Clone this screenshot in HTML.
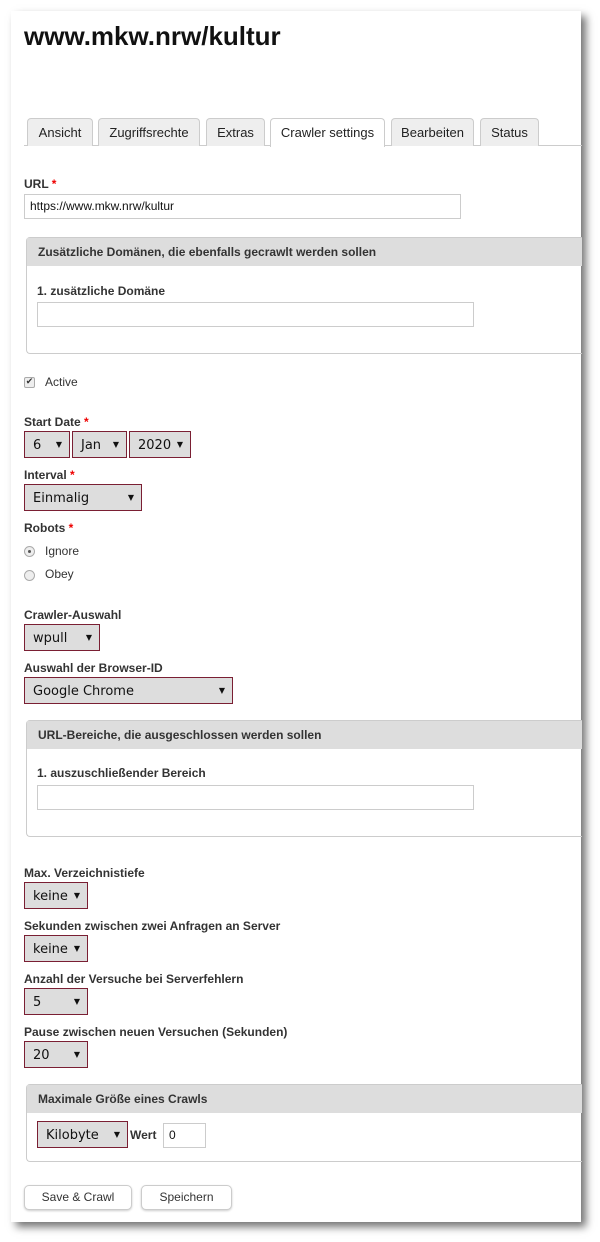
<!DOCTYPE html>
<html><head><meta charset="utf-8"><style>
*{box-sizing:border-box;margin:0;padding:0}
body{width:600px;height:1242px;background:#fff;position:relative;font-family:"DejaVu Sans","Liberation Sans",sans-serif;color:#333;overflow:hidden}
#p{position:absolute;left:11px;top:11px;width:570px;height:1211px;background:#fff;box-shadow:5px 5px 8px rgba(0,0,0,.55)}
.a{position:absolute}
h1{position:absolute;left:24px;top:21px;font:bold 26px "Liberation Sans",sans-serif;color:#111}
.tab{position:absolute;top:118px;height:28px;border:1px solid #ccc;border-bottom:none;border-radius:4px 4px 0 0;background:#eee;font:13px "Liberation Sans",sans-serif;color:#222;text-align:center;line-height:27px}
.tab.on{background:#fff;height:29px}
.lbl{position:absolute;left:24px;font:bold 12px "Liberation Sans",sans-serif;color:#333}
.lbl b{color:#e00}
.in{position:absolute;border:1px solid #ccc;background:#fff;font:12px "Liberation Sans",sans-serif;padding-left:5px;line-height:23px;color:#111}
.sel{position:absolute;height:27px;border:1px solid #7a1f33;background:#ddd;font-size:13px;color:#111;padding-left:8px;line-height:27px}
.sel:after{content:"▼";position:absolute;right:7px;top:0;font-size:8px;line-height:25px}
.fs{position:absolute;left:26px;width:556px;border:1px solid #ccc;border-radius:4px 0 0 4px;border-right:none}
.fs .h{height:28px;background:#ddd;font:bold 12px "Liberation Sans",sans-serif;padding-left:11px;line-height:28px;color:#333}
.t{position:absolute;font:12px "Liberation Sans",sans-serif;color:#333}
.btn{position:absolute;top:1185px;height:25px;border:1px solid #ccc;border-radius:5px;background:#fff;font:12px "Liberation Sans",sans-serif;text-align:center;line-height:23px;box-shadow:0 1px 2px rgba(0,0,0,.2)}
</style></head><body>
<div id="p"></div>
<h1>www.mkw.nrw/kultur</h1>
<div class="a" style="left:24px;top:145px;width:558px;border-top:1px solid #ccc"></div>
<div class="tab" style="left:27px;width:66px">Ansicht</div>
<div class="tab" style="left:98px;width:102px">Zugriffsrechte</div>
<div class="tab" style="left:206px;width:59px">Extras</div>
<div class="tab on" style="left:270px;width:115px">Crawler settings</div>
<div class="tab" style="left:391px;width:83px">Bearbeiten</div>
<div class="tab" style="left:480px;width:59px">Status</div>

<div class="lbl" style="top:177px">URL <b>*</b></div>
<div class="in" style="left:24px;top:194px;width:437px;height:25px">https://www.mkw.nrw/kultur</div>

<div class="fs" style="top:237px;height:117px"><div class="h">Zusätzliche Domänen, die ebenfalls gecrawlt werden sollen</div></div>
<div class="lbl" style="left:37px;top:284px">1. zusätzliche Domäne</div>
<div class="in" style="left:37px;top:302px;width:437px;height:25px"></div>

<div class="a" style="left:24px;top:377px;width:11px;height:11px;border:1px solid #aaa;border-radius:2px;background:#eee;font-size:9px;line-height:9px;text-align:center">✔</div>
<div class="t" style="left:45px;top:375px">Active</div>

<div class="lbl" style="top:415px">Start Date <b>*</b></div>
<div class="sel" style="left:24px;top:431px;width:46px">6</div>
<div class="sel" style="left:72px;top:431px;width:55px">Jan</div>
<div class="sel" style="left:129px;top:431px;width:62px">2020</div>

<div class="lbl" style="top:468px">Interval <b>*</b></div>
<div class="sel" style="left:24px;top:484px;width:118px">Einmalig</div>

<div class="lbl" style="top:521px">Robots <b>*</b></div>
<div class="a" style="left:24px;top:546px;width:11px;height:11px;border:1px solid #aaa;border-radius:50%;background:#eee"><div style="position:absolute;left:3px;top:3px;width:3px;height:3px;border-radius:50%;background:#555"></div></div>
<div class="t" style="left:45px;top:544px">Ignore</div>
<div class="a" style="left:24px;top:570px;width:11px;height:11px;border:1px solid #aaa;border-radius:50%;background:#eee"></div>
<div class="t" style="left:45px;top:567px">Obey</div>

<div class="lbl" style="top:608px">Crawler-Auswahl</div>
<div class="sel" style="left:24px;top:624px;width:76px">wpull</div>
<div class="lbl" style="top:661px">Auswahl der Browser-ID</div>
<div class="sel" style="left:24px;top:677px;width:209px">Google Chrome</div>

<div class="fs" style="top:720px;height:117px"><div class="h">URL-Bereiche, die ausgeschlossen werden sollen</div></div>
<div class="lbl" style="left:37px;top:766px">1. auszuschließender Bereich</div>
<div class="in" style="left:37px;top:785px;width:437px;height:25px"></div>

<div class="lbl" style="top:866px">Max. Verzeichnistiefe</div>
<div class="sel" style="left:24px;top:882px;width:64px">keine</div>
<div class="lbl" style="top:919px">Sekunden zwischen zwei Anfragen an Server</div>
<div class="sel" style="left:24px;top:935px;width:64px">keine</div>
<div class="lbl" style="top:972px">Anzahl der Versuche bei Serverfehlern</div>
<div class="sel" style="left:24px;top:988px;width:64px">5</div>
<div class="lbl" style="top:1025px">Pause zwischen neuen Versuchen (Sekunden)</div>
<div class="sel" style="left:24px;top:1041px;width:64px">20</div>

<div class="fs" style="top:1084px;height:78px"><div class="h">Maximale Größe eines Crawls</div></div>
<div class="sel" style="left:37px;top:1121px;width:91px">Kilobyte</div>
<div class="lbl" style="left:130px;top:1128px">Wert</div>
<div class="in" style="left:163px;top:1123px;width:43px;height:25px">0</div>

<div class="btn" style="left:24px;width:108px">Save &amp; Crawl</div>
<div class="btn" style="left:141px;width:91px">Speichern</div>
</body></html>
